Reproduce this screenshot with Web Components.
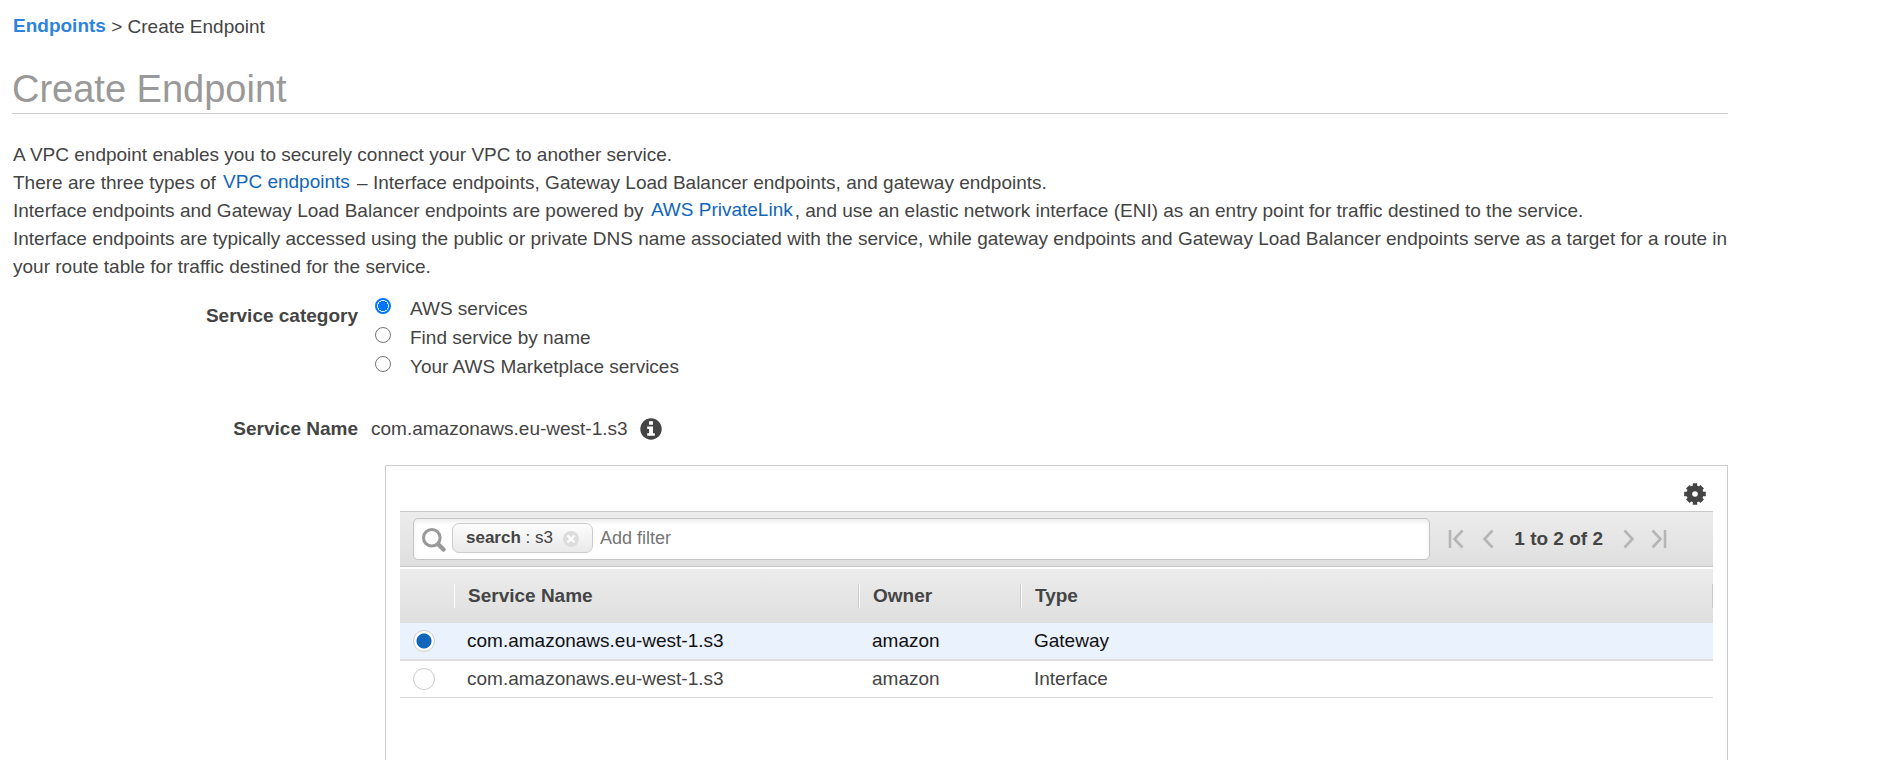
<!DOCTYPE html>
<html lang="en">
<head>
<meta charset="utf-8">
<title>Create Endpoint</title>
<style>
body { margin: 0; background: #fff; color: #444; font: 19px/28px "Liberation Sans", Arial, sans-serif; }
</style>
</head>
<body>
<endpoint-page>
  <bread-crumb slot="nav" parent="Endpoints">Create Endpoint</bread-crumb>
  <page-title>Create Endpoint</page-title>
  <endpoint-intro></endpoint-intro>
  <category-picker></category-picker>
  <service-name>com.amazonaws.eu-west-1.s3</service-name>
  <service-panel>
    <filter-bar></filter-bar>
    <service-table></service-table>
  </service-panel>
</endpoint-page>
<script>
const define = (name, html, setup) => customElements.define(name, class extends HTMLElement {
  constructor() {
    super();
    this.attachShadow({ mode: "open" }).innerHTML = html;
  }
  connectedCallback() { if (setup) setup(this, this.shadowRoot); }
});

define("endpoint-page", `
<style>
:host { display: flex; flex-direction: column; min-height: 100vh; box-sizing: border-box; padding: 13px 166px 0 12px; }
main { display: flex; flex-direction: column; flex: 1; }
</style>
<slot name="nav"></slot>
<main><slot></slot></main>`);

define("bread-crumb", `
<style>
:host { display: block; padding-left: 1px; }
a { color: #2e83dc; font-weight: bold; text-decoration: none; vertical-align: 1px; line-height: 20px; }
</style>
<nav aria-label="Breadcrumb"><a href="#"></a> &gt; <slot></slot></nav>`,
(host, root) => { root.querySelector("a").textContent = host.getAttribute("parent"); });

define("page-title", `
<style>
:host { display: block; margin-top: 25px; border-bottom: 1px solid #ccc; }
h1 { margin: 0; color: #999; font-size: 38px; font-weight: normal; line-height: 47px; }
</style>
<h1><slot></slot></h1>`);

define("endpoint-intro", `
<style>
:host { display: block; margin-top: 27px; padding-left: 1px; }
p { margin: 0; }
a { color: #16b; text-decoration: none; vertical-align: 1px; line-height: 20px; padding: 0 2px; }
</style>
<p>A VPC endpoint enables you to securely connect your VPC to another service.</p>
<p>There are three types of <a href="#">VPC endpoints</a> – Interface endpoints, Gateway Load Balancer endpoints, and gateway endpoints.</p>
<p>Interface endpoints and Gateway Load Balancer endpoints are powered by <a href="#">AWS PrivateLink</a>, and use an elastic network interface (ENI) as an entry point for traffic destined to the service.</p>
<p>Interface endpoints are typically accessed using the public or private DNS name associated with the service, while gateway endpoints and Gateway Load Balancer endpoints serve as a target for a route in your route table for traffic destined for the service.</p>`);

define("category-picker", `
<style>
:host { display: grid; grid-template-columns: 346px 1fr; column-gap: 17px; margin-top: 13px; }
.name { text-align: right; font-weight: bold; padding-top: 8px; }
.options { display: grid; justify-items: start; }
label { display: flex; align-items: flex-start; gap: 19px; line-height: 29px; }
input { appearance: none; box-sizing: border-box; width: 16px; height: 16px; margin: 4px 0 0; border: 1px solid #767676; border-radius: 50%; background: #fff; }
input:checked { border: 2px solid #0075ff; background: radial-gradient(circle, #0075ff 5px, #fff 5px); }
</style>
<div class="name" id="name">Service category</div>
<div class="options" role="radiogroup" aria-labelledby="name">
  <label><input type="radio" name="category" checked>AWS services</label>
  <label><input type="radio" name="category">Find service by name</label>
  <label><input type="radio" name="category">Your AWS Marketplace services</label>
</div>`);

define("service-name", `
<style>
:host { display: grid; grid-template-columns: 346px 1fr; column-gap: 13px; margin-top: 34px; }
.name { text-align: right; font-weight: bold; }
.value { display: flex; align-items: center; gap: 12px; }
button { display: flex; padding: 0; border: 0; background: none; }
</style>
<div class="name">Service Name</div>
<div class="value"><slot></slot>
  <button aria-label="About service name"><svg width="22" height="22" viewBox="0 0 22 22"><circle cx="11" cy="11" r="10.7" fill="#444"/><path fill="#fff" d="M9 3.2h4v3.5H9zM7.2 8.6H13v6.6h1.8v2.5H7.2v-2.5H9v-4.1H7.2z"/></svg></button>
</div>`);

define("service-panel", `
<style>
:host { display: flex; flex-direction: column; flex: 1; margin: 22px 0 0 373px; padding: 17px 14px 0; border: 1px solid #ccc; border-bottom: 0; }
.tools { display: flex; justify-content: flex-end; padding: 0 7px 6px 0; }
button { display: flex; padding: 0; border: 0; background: none; }
</style>
<div class="tools"><button aria-label="Table settings"><svg width="22" height="22" viewBox="-11 -11 22 22"><g fill="#444"><circle r="8.500"/><path d="M-2.200-10.800h4.400v21.600h-4.400zM-10.800-2.200h21.600v4.400h-21.600z"/><path transform="rotate(45)" d="M-2.500-10.200h5v20.400h-5zM-10.200-2.500h20.400v5h-20.400z"/></g><circle r="2.800" fill="#fff"/></svg></button></div>
<slot></slot>`);

define("filter-bar", `
<style>
:host { display: flex; align-items: center; padding: 6px 46px 6px 13px; border: solid #c8c8c8; border-width: 1px 0; background: linear-gradient(#ececec, #dfdfdf); }
.field { flex: 1; display: flex; align-items: center; box-sizing: border-box; height: 42px; padding: 0 6px 3px 8px; border: 1px solid #c4c4c4; border-radius: 5px; background: #fff; box-shadow: inset 0 3px 4px #eee; }
.glass { margin-top: 5px; }
.chip { display: flex; align-items: center; box-sizing: border-box; height: 30px; margin: 0 7px 0 6px; padding: 0 13px; border: 1px solid #ccc; border-radius: 7px; background: linear-gradient(#fdfdfd, #e9e9e9); font-size: 17px; white-space: pre; }
button { display: flex; padding: 0; border: 0; background: none; }
.chip button { margin: 3px 0 0 10px; }
input { flex: 1; min-width: 0; padding: 0; border: 0; outline: 0; background: none; font: inherit; font-size: 18px; color: #444; }
input::placeholder { color: #757575; opacity: 1; }
.pager { display: flex; align-items: center; margin-left: 18px; }
.count { margin: 0 20px; font-weight: bold; }
.first { margin-right: 18px; }
.next { margin-right: 16px; }
</style>
<div class="field">
  <svg class="glass" width="24" height="24" viewBox="0 0 24 24" fill="none" stroke="#999"><circle cx="9.800" cy="9.800" r="8.300" stroke-width="3"/><path d="M16.500 16.500l5 5" stroke-width="4.500" stroke-linecap="round"/></svg>
  <span class="chip"><b>search</b> : s3<button aria-label="Remove filter"><svg width="16" height="16" viewBox="0 0 16 16"><circle cx="8" cy="8" r="8" fill="#dcdcdc"/><path d="M4.500 4.500l7 7m0-7l-7 7" stroke="#fff" stroke-width="2.400"/></svg></button></span>
  <input type="text" placeholder="Add filter" aria-label="Add filter">
</div>
<div class="pager">
  <button class="first" aria-label="First page"><svg width="16" height="20" viewBox="0 0 16 20" fill="none" stroke="#b5b5b5" stroke-width="2.600"><path d="M2 1v18M14.500 1.500L6.500 10l8 8.500"/></svg></button>
  <button aria-label="Previous page"><svg width="12" height="20" viewBox="0 0 12 20" fill="none" stroke="#b5b5b5" stroke-width="2.600"><path d="M10.500 1.500L2.500 10l8 8.500"/></svg></button>
  <span class="count">1 to 2 of 2</span>
  <button class="next" aria-label="Next page"><svg width="12" height="20" viewBox="0 0 12 20" fill="none" stroke="#b5b5b5" stroke-width="2.600"><path d="M1.500 1.500L9.500 10l-8 8.500"/></svg></button>
  <button aria-label="Last page"><svg width="16" height="20" viewBox="0 0 16 20" fill="none" stroke="#b5b5b5" stroke-width="2.600"><path d="M14 1v18M1.500 1.500L9.500 10l-8 8.500"/></svg></button>
</div>`);

define("service-table", `
<style>
:host { display: block; margin-top: 2px; }
table { width: 100%; table-layout: fixed; border-spacing: 0; }
.pick { width: 54px; }
.service { width: 405px; }
.owner { width: 162px; }
thead tr { background: linear-gradient(#ececec, #dfdfdf); }
th { height: 54px; padding: 0; text-align: left; }
th span { display: block; height: 24px; padding-left: 13px; border-left: 1px solid #fff; border-right: 1px solid #ccc; line-height: 24px; }
th:first-child span { border-left: 0; border-right-color: transparent; }
td { height: 36px; padding: 0 0 0 13px; border-bottom: 1px solid #ddd; }
tr.selected td { background: #eaf2fe; color: #111; border-bottom: 2px solid #ddd; }
td input { display: block; appearance: none; box-sizing: border-box; width: 22px; height: 22px; margin: 0; border: 1px solid #ccc; border-radius: 50%; background: #fff; }
td input:checked { background: radial-gradient(circle, #16b 7px, #fff 8px); }
</style>
<table>
  <colgroup><col class="pick"><col class="service"><col class="owner"><col></colgroup>
  <thead><tr><th aria-label="Select"><span></span></th><th><span>Service Name</span></th><th><span>Owner</span></th><th><span>Type</span></th></tr></thead>
  <tbody>
    <tr class="selected"><td><input type="radio" name="service" aria-label="Gateway endpoint" checked></td><td>com.amazonaws.eu-west-1.s3</td><td>amazon</td><td>Gateway</td></tr>
    <tr><td><input type="radio" name="service" aria-label="Interface endpoint"></td><td>com.amazonaws.eu-west-1.s3</td><td>amazon</td><td>Interface</td></tr>
  </tbody>
</table>`,
(host, root) => root.querySelector("tbody").addEventListener("change", e => {
  for (const row of root.querySelectorAll("tbody tr")) row.classList.toggle("selected", row.contains(e.target));
}));
</script>
</body>
</html>
